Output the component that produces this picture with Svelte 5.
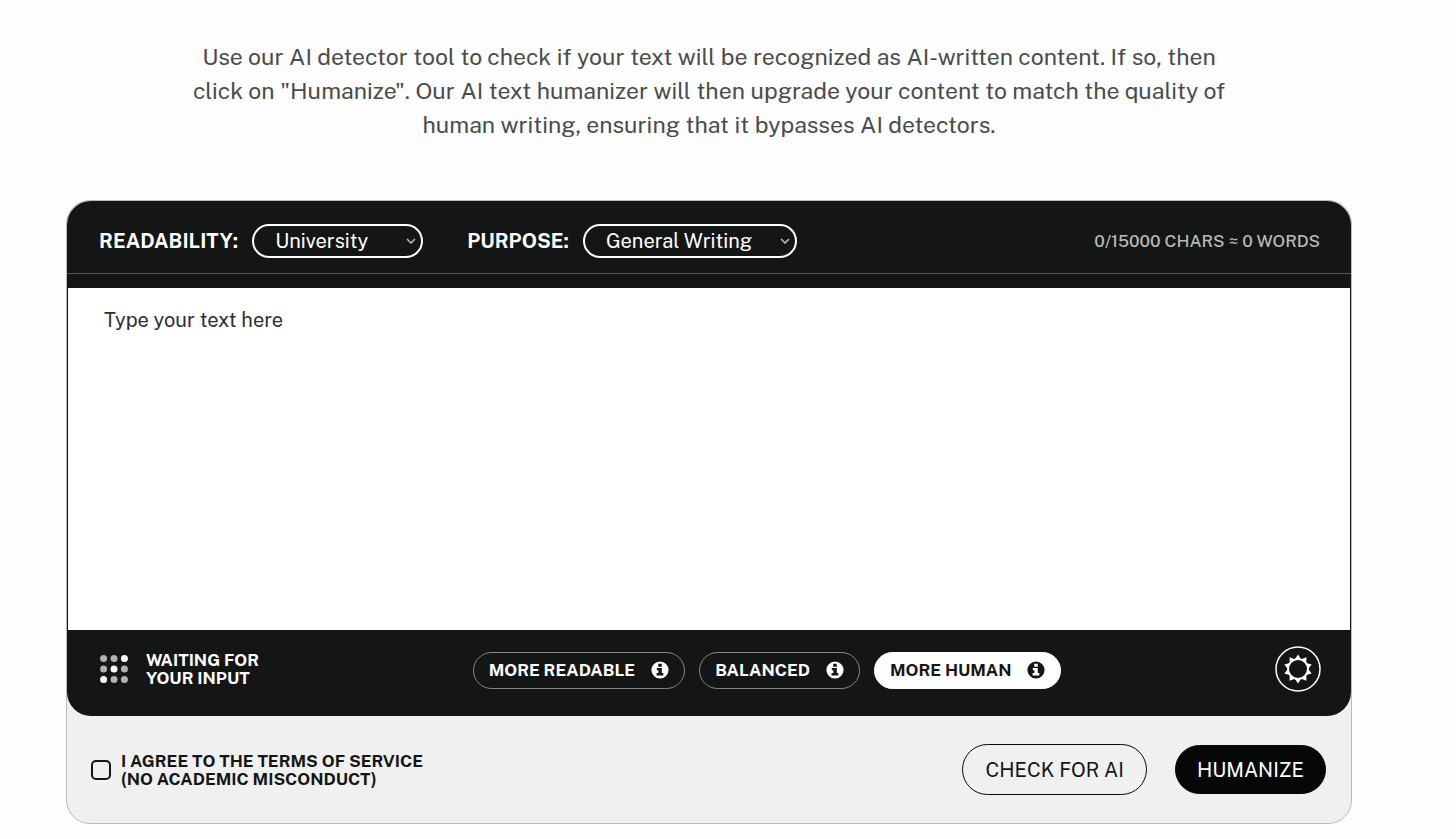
<!--
  Humanizer panel: intro copy, readability/purpose selects, the text area,
  mode pills and the terms + action row underneath.
-->
<script lang="ts">
	const MAX_CHARS = 15000;

	const readabilityOptions = ['High School', 'University', 'Doctorate', 'Journalist'];
	const purposeOptions = ['General Writing', 'Essay', 'Article', 'Story', 'Cover Letter'];
	const modes = ['More Readable', 'Balanced', 'More Human'];

	// which of the nine status dots are lit
	const dots = [false, false, true, false, true, false, true, false, false];

	let readability = $state('University');
	let purpose = $state('General Writing');
	let mode = $state('More Human');
	let text = $state('');
	let agreed = $state(false);

	let words = $derived(text.trim() ? text.trim().split(/\s+/).length : 0);
</script>

{#snippet chevron()}
	<svg class="chevron" viewBox="0 0 10 6" aria-hidden="true">
		<path d="M1 1l4 4 4-4" />
	</svg>
{/snippet}

<main>
	<p class="intro">
		Use our AI detector tool to check if your text will be recognized as AI-written content. If so,
		then click on "Humanize". Our AI text humanizer will then upgrade your content to match the
		quality of human writing, ensuring that it bypasses AI detectors.
	</p>

	<section class="card">
		<div class="tool">
			<div class="toolbar">
				<div class="field">
					<label for="readability">Readability:</label>
					<div class="select">
						<select id="readability" bind:value={readability}>
							{#each readabilityOptions as option (option)}
								<option value={option}>{option}</option>
							{/each}
						</select>
						{@render chevron()}
					</div>
				</div>
				<div class="field">
					<label for="purpose">Purpose:</label>
					<div class="select wide">
						<select id="purpose" bind:value={purpose}>
							{#each purposeOptions as option (option)}
								<option value={option}>{option}</option>
							{/each}
						</select>
						{@render chevron()}
					</div>
				</div>
				<p class="count" aria-live="polite">{text.length}/{MAX_CHARS} chars ≈ {words} words</p>
			</div>

			<textarea
				bind:value={text}
				maxlength={MAX_CHARS}
				placeholder="Type your text here"
				aria-label="Your text"
			></textarea>

			<div class="statusbar">
				<div class="status">
					<svg class="dots" viewBox="0 0 28 28" aria-hidden="true">
						{#each dots as lit, i (i)}
							<circle
								class:lit
								cx={3.6 + (i % 3) * 10.4}
								cy={3.6 + Math.floor(i / 3) * 10.4}
								r="3.5"
							/>
						{/each}
					</svg>
					<span>Waiting for<br />your input</span>
				</div>

				<div class="modes">
					{#each modes as name (name)}
						<button
							type="button"
							class="mode"
							class:active={mode === name}
							aria-pressed={mode === name}
							onclick={() => (mode = name)}
						>
							{name}
							<svg class="info" viewBox="0 0 18 18" aria-hidden="true">
								<circle cx="9" cy="9" r="8.6" />
								<path d="M7.2 2.8h3.6v2.9H7.2zM5.8 6.9h5v5.2h1.5v2.4H5.6v-2.4h1.8V9.2H5.8z" />
							</svg>
						</button>
					{/each}
				</div>

				<button type="button" class="settings" aria-label="Settings">
					<svg viewBox="0 0 46 46" aria-hidden="true">
						<circle cx="23" cy="23" r="22" />
						{#each Array(10) as _, i (i)}
							<path d="M23 8.6l4.2 6.4h-8.4z" transform="rotate({i * 36} 23 23)" />
						{/each}
						<circle cx="23" cy="23" r="9.9" class="ring" />
					</svg>
				</button>
			</div>
		</div>

		<div class="actions">
			<label class="terms">
				<input type="checkbox" bind:checked={agreed} />
				<span>I agree to the terms of service<br />(no academic misconduct)</span>
			</label>
			<div class="buttons">
				<button type="button" class="check">Check for AI</button>
				<button type="button" class="humanize">Humanize</button>
			</div>
		</div>
	</section>
</main>

<style>
	:global(body) {
		margin: 0;
		background: #fdfdfd;
	}
	main {
		padding: 40px 104px 16px 66px;
		font-family: 'Public Sans', Inter, 'Liberation Sans', sans-serif;
		color: #141615;
	}
	button,
	select,
	textarea {
		font: inherit;
		color: inherit;
	}
	button {
		cursor: pointer;
		text-transform: uppercase;
	}
	.intro {
		max-width: 1040px;
		margin: 0 auto 58px;
		font-size: 23px;
		line-height: 34px;
		text-align: center;
		color: #4a4c4b;
	}
	.card {
		border: 1px solid #b9bab9;
		border-radius: 24px;
		background: #f0f0f0;
	}
	.tool {
		overflow: hidden;
		border-radius: 24px;
		background: #141615;
	}
	.toolbar {
		display: flex;
		align-items: center;
		gap: 44px;
		margin-bottom: 14px;
		padding: 23px 31px 15px 32px;
		border-bottom: 1px solid #555756;
		color: #fff;
	}
	.field {
		display: flex;
		align-items: center;
		gap: 14px;
	}
	.field label {
		font-size: 20px;
		font-weight: 700;
		text-transform: uppercase;
	}
	.select {
		position: relative;
		width: 171px;
	}
	.select.wide {
		width: 214px;
	}
	select {
		appearance: none;
		display: block;
		box-sizing: border-box;
		width: 100%;
		height: 34px;
		padding: 0 21px;
		border: 2px solid #fff;
		border-radius: 17px;
		background: transparent;
		font-size: 20px;
	}
	select option {
		color: initial;
	}
	.chevron {
		position: absolute;
		top: 14px;
		right: 7px;
		width: 10px;
		height: 6px;
		fill: none;
		stroke: #b9bab9;
		stroke-width: 1.6;
		pointer-events: none;
	}
	.count {
		margin: 0 0 0 auto;
		font-size: 17px;
		font-weight: 500;
		text-transform: uppercase;
		color: #b9bab9;
	}
	textarea {
		display: block;
		box-sizing: border-box;
		width: 100%;
		height: 342px;
		padding: 18px 36px;
		border: 0 solid #141615;
		border-width: 0 1px;
		background: #fff;
		font-size: 20px;
		line-height: 28px;
		resize: none;
	}
	textarea::placeholder {
		color: #2c302e;
		opacity: 1;
	}
	.statusbar {
		display: flex;
		align-items: center;
		justify-content: space-between;
		padding: 16px 30px 24px 33px;
		color: #fff;
	}
	.status {
		display: flex;
		align-items: center;
		gap: 18px;
		font-size: 17px;
		font-weight: 700;
		line-height: 18px;
		text-transform: uppercase;
	}
	.dots {
		width: 28px;
		height: 28px;
		fill: #b0b1b0;
	}
	.dots .lit {
		fill: #fff;
	}
	.modes {
		display: flex;
		gap: 14px;
		padding-top: 2px;
	}
	.mode {
		display: flex;
		align-items: center;
		gap: 16px;
		height: 37px;
		padding: 0 15px;
		border: 1px solid #868887;
		border-radius: 19px;
		background: transparent;
		font-size: 17px;
		font-weight: 700;
	}
	.mode.active {
		border-color: #fff;
		background: #fff;
		color: #141615;
	}
	.info {
		width: 18px;
		height: 18px;
		fill: #fff;
	}
	.info path {
		fill: #141615;
	}
	.active .info {
		fill: #141615;
	}
	.active .info path {
		fill: #fff;
	}
	.settings {
		width: 46px;
		height: 46px;
		padding: 0;
		border: 0;
		border-radius: 50%;
		background: transparent;
	}
	.settings svg {
		display: block;
		fill: #fff;
	}
	.settings circle {
		fill: #141615;
		stroke: #fff;
		stroke-width: 1.5;
	}
	.settings .ring {
		stroke-width: 1.8;
	}
	.actions {
		display: flex;
		align-items: center;
		justify-content: space-between;
		padding: 28px 25px 28px 24px;
	}
	.terms {
		display: flex;
		align-items: center;
		gap: 10px;
		font-size: 17px;
		font-weight: 700;
		line-height: 18px;
		text-transform: uppercase;
	}
	.terms input {
		appearance: none;
		width: 20px;
		height: 20px;
		margin: 0;
		border: 2px solid #141615;
		border-radius: 5px;
	}
	.terms input:checked {
		background: #141615;
	}
	.buttons {
		display: flex;
		align-items: center;
		gap: 28px;
	}
	.check,
	.humanize {
		padding: 0 21px;
		border: 1px solid #060807;
		border-radius: 26px;
		font-size: 20px;
	}
	.check {
		height: 51px;
		padding: 0 22px;
		background: transparent;
	}
	.humanize {
		height: 49px;
		background: #060807;
		color: #fff;
	}
	button:focus-visible,
	select:focus-visible {
		outline: 2px solid #4a9eda;
		outline-offset: 2px;
	}
	textarea:focus {
		outline: none;
	}
</style>
